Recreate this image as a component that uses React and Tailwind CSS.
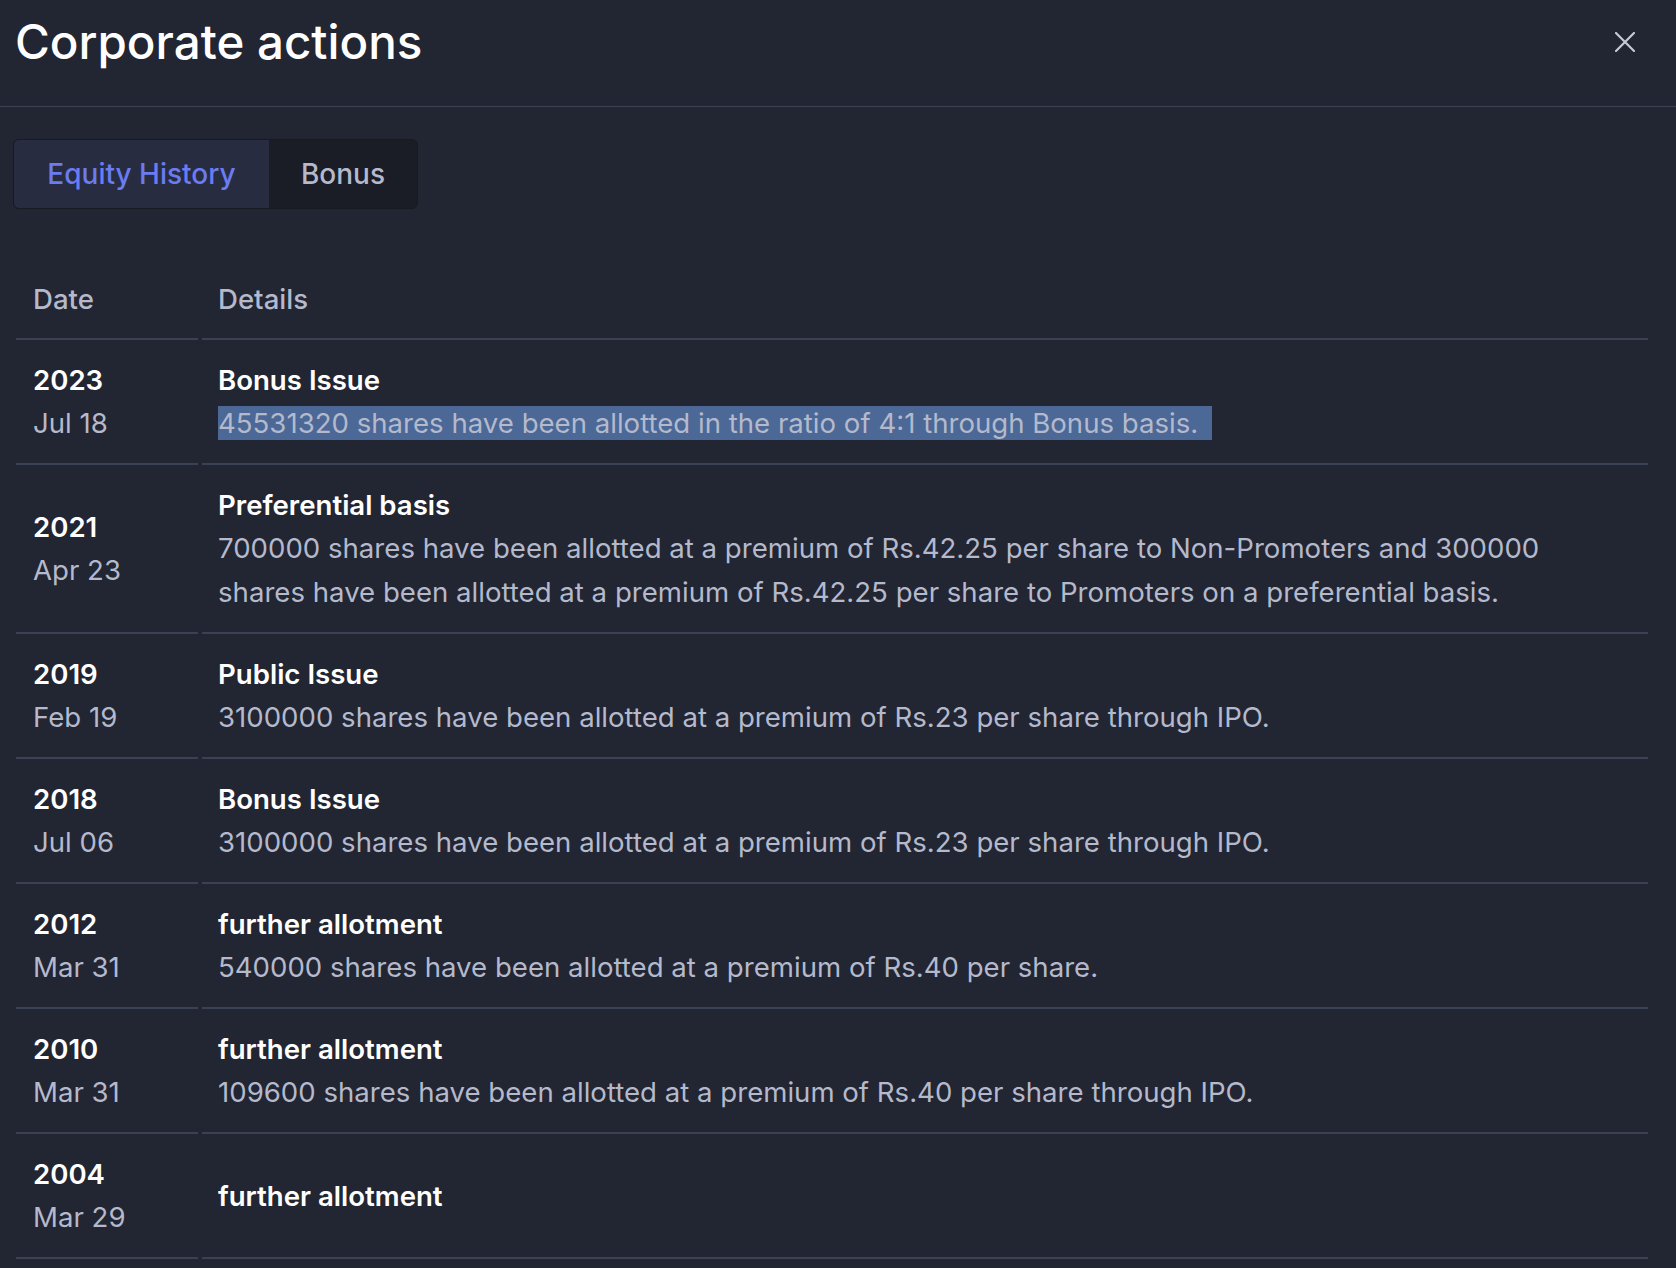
import { useState } from "react";

const rows = [
  {
    year: "2023",
    date: "Jul 18",
    title: "Bonus Issue",
    desc: "45531320 shares have been allotted in the ratio of 4:1 through Bonus basis.",
    selected: true,
  },
  {
    year: "2021",
    date: "Apr 23",
    title: "Preferential basis",
    desc: "700000 shares have been allotted at a premium of Rs.42.25 per share to Non-Promoters and 300000 shares have been allotted at a premium of Rs.42.25 per share to Promoters on a preferential basis.",
  },
  {
    year: "2019",
    date: "Feb 19",
    title: "Public Issue",
    desc: "3100000 shares have been allotted at a premium of Rs.23 per share through IPO.",
  },
  {
    year: "2018",
    date: "Jul 06",
    title: "Bonus Issue",
    desc: "3100000 shares have been allotted at a premium of Rs.23 per share through IPO.",
  },
  {
    year: "2012",
    date: "Mar 31",
    title: "further allotment",
    desc: "540000 shares have been allotted at a premium of Rs.40 per share.",
  },
  {
    year: "2010",
    date: "Mar 31",
    title: "further allotment",
    desc: "109600 shares have been allotted at a premium of Rs.40 per share through IPO.",
  },
  {
    year: "2004",
    date: "Mar 29",
    title: "further allotment",
    desc: "",
  },
];

export default function App() {
  const [tab, setTab] = useState("equity");

  return (
    <div className="min-h-screen bg-[#222532] font-['Inter','Noto_Sans',sans-serif] text-[27.6px]">
      {/* header */}
      <div className="flex items-start justify-between border-b border-[#3a4254] pl-[15px] pr-[41px] pt-[14px] pb-[36px]">
        <h1 className="text-[47.5px] font-medium leading-[56px] text-white">
          Corporate actions
        </h1>
        <button className="mt-[18px] text-[#c6cad6]">
          <svg width="20" height="20" viewBox="0 0 20 20" fill="none">
            <path
              d="M1 1L19 19M19 1L1 19"
              stroke="currentColor"
              strokeWidth="2.2"
              strokeLinecap="round"
            />
          </svg>
        </button>
      </div>

      {/* tabs */}
      <div className="ml-[13px] mt-[32px] flex h-[70px] w-fit overflow-hidden rounded-md border border-[#181a21] bg-[#1b1d26] text-[28px]">
        <button
          onClick={() => setTab("equity")}
          className={
            tab === "equity"
              ? "w-[255px] bg-[#282c40] font-medium text-[#6a7cf0]"
              : "w-[255px] font-medium text-[#b4b9cc]"
          }
        >
          Equity History
        </button>
        <button
          onClick={() => setTab("bonus")}
          className={
            tab === "bonus"
              ? "w-[148px] bg-[#282c40] font-medium text-[#6a7cf0]"
              : "w-[148px] font-medium text-[#b4b9cc]"
          }
        >
          Bonus
        </button>
      </div>

      {/* table */}
      <div className="ml-[16px] mr-[28px] mt-[48px]">
        <div className="flex gap-[4px] font-medium text-[#b4b9cc]">
          <div className="w-[182px] shrink-0 border-b-2 border-[#3a4254] pl-[17px] pt-[20px] pb-[17px] leading-[44px]">
            Date
          </div>
          <div className="flex-1 border-b-2 border-[#3a4254] pl-[16px] pt-[20px] pb-[17px] leading-[44px]">
            Details
          </div>
        </div>

        {rows.map((r, i) => (
          <div key={i} className="flex gap-[4px]">
            <div className="flex w-[182px] shrink-0 flex-col justify-center border-b-2 border-[#3a4254] pl-[17px] pt-[19px] pb-[18px]">
              <div className="font-semibold leading-[42px] text-white">{r.year}</div>
              <div className="leading-[44px] text-[#b4b9cc]">{r.date}</div>
            </div>
            <div className="flex flex-1 flex-col justify-center border-b-2 border-[#3a4254] pl-[16px] pr-[40px] pt-[19px] pb-[18px]">
              <div className="font-semibold leading-[42px] text-white">{r.title}</div>
              {r.desc && (
                <div className="leading-[44px] text-[#b4b9cc]">
                  {r.selected ? (
                    <span className="bg-[#4b6896] pr-[14px]">{r.desc}</span>
                  ) : (
                    r.desc
                  )}
                </div>
              )}
            </div>
          </div>
        ))}
      </div>
    </div>
  );
}
